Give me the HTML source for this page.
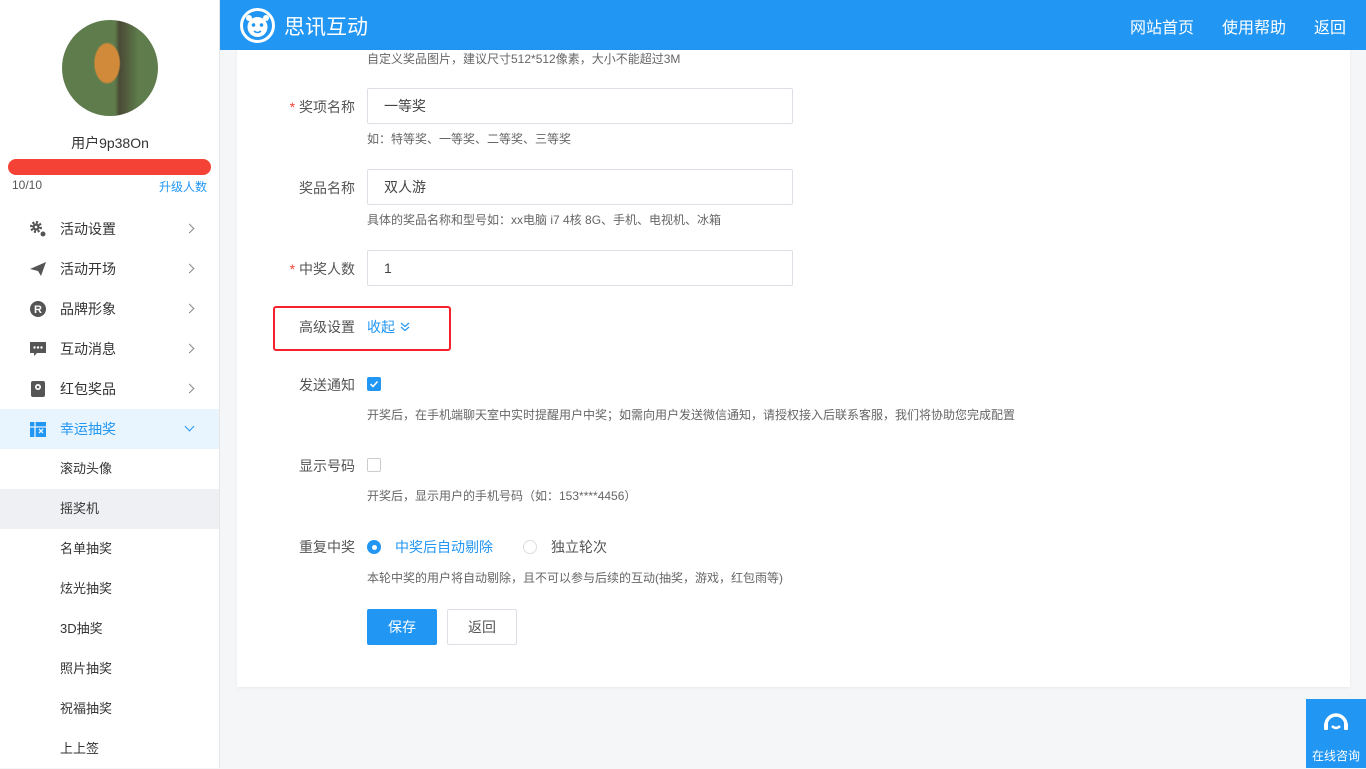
<!DOCTYPE html>
<html><head><meta charset="utf-8"><style>
*{margin:0;padding:0;box-sizing:border-box}
body{width:1366px;height:768px;overflow:hidden;background:#f5f6f7;font-family:"Liberation Sans","Noto Sans CJK SC",sans-serif;color:#333;position:relative}
.side{position:absolute;left:0;top:0;width:220px;height:768px;background:#fff;border-right:1px solid #e6e6e6}
.av{position:absolute;left:62px;top:20px;width:96px;height:96px;border-radius:50%;background:radial-gradient(ellipse 14% 22% at 47% 45%,#d08a3a 0 90%,transparent 100%),linear-gradient(90deg,#5f7d4c 0 55%,#4a4a35 60%,#5f7d4c 80%),#5f7d4c}
.uname{position:absolute;top:133px;width:220px;text-align:center;font-size:14px;color:#333}
.bar{position:absolute;left:8px;top:159px;width:203px;height:16px;border-radius:8px;background:#f44336}
.cnt{position:absolute;left:12px;top:178px;font-size:12px;color:#555}
.up{position:absolute;right:12px;top:178px;font-size:12px;color:#2196f3}
.menu{position:absolute;top:209px;left:0;width:219px}
.mi{height:40px;display:flex;align-items:center;font-size:14px;color:#333;position:relative}
.mi .ic{width:18px;height:18px;margin-left:29px;margin-right:13px;display:flex;align-items:center;justify-content:center}
.mi .ar{position:absolute;right:26px;top:16px;width:7px;height:7px;border-right:1px solid #888;border-top:1px solid #888;transform:rotate(45deg)}
.mi.act{background:#e8f4fe;color:#2196f3}
.mi.act .ar{transform:rotate(135deg);border-color:#2196f3;top:14px}
.sub{height:40px;line-height:40px;padding-left:60px;font-size:13px;color:#333}
.sub.sel{background:#eef0f3}
.hdr{position:absolute;left:220px;top:0;width:1146px;height:50px;background:#2196f3;color:#fff}
.logo{position:absolute;left:20px;top:8px;width:35px;height:35px;border-radius:50%;border:3px solid #fff}
.brand{position:absolute;left:64px;top:11px;font-size:21px}
.nav{position:absolute;right:20px;top:14px;font-size:16px}
.nav span{margin-left:28px}
.card{position:absolute;left:237px;top:50px;width:1113px;height:637px;background:#fff;box-shadow:0 1px 3px rgba(0,0,0,.06)}
.lbl{position:absolute;width:118px;text-align:right;font-size:14px;color:#555;left:0}
.req:before{content:"* ";color:#f44336}
.inp{position:absolute;left:130px;width:426px;height:36px;border:1px solid #dcdfe6;border-radius:2px;font-size:14px;padding-left:16px;line-height:34px;color:#444}
.tip{position:absolute;left:130px;font-size:12px;color:#666}
.chk{position:absolute;left:130px;width:14px;height:14px;border-radius:2px}
</style></head><body>
<div class="side">
<div class="av"></div>
<div class="uname">用户9p38On</div>
<div class="bar"></div>
<div class="cnt">10/10</div><div class="up">升级人数</div>
<div class="menu">
<div class="mi"><span class="ic"><svg width="18" height="18" viewBox="0 0 18 18"><circle cx="7" cy="7" r="4.5" fill="none" stroke="#555" stroke-width="3" stroke-dasharray="2 1.5"/><circle cx="7" cy="7" r="3.5" fill="#555"/><circle cx="7" cy="7" r="1.3" fill="#fff"/><circle cx="14" cy="14" r="2.5" fill="#555"/></svg></span>活动设置<i class="ar"></i></div>
<div class="mi"><span class="ic"><svg width="18" height="18" viewBox="0 0 18 18"><path d="M1 9L17 2 12 16 9 11Z" fill="#555"/></svg></span>活动开场<i class="ar"></i></div>
<div class="mi"><span class="ic"><svg width="18" height="18"><circle cx="9" cy="9" r="8" fill="#555"/><text x="9" y="13" font-size="11" fill="#fff" text-anchor="middle" font-family="Liberation Sans" font-weight="bold">R</text></svg></span>品牌形象<i class="ar"></i></div>
<div class="mi"><span class="ic"><svg width="18" height="18"><path d="M1 2h16v11H8l-3 3v-3H1z" fill="#555"/><circle cx="5.5" cy="7.5" r="1.2" fill="#fff"/><circle cx="9" cy="7.5" r="1.2" fill="#fff"/><circle cx="12.5" cy="7.5" r="1.2" fill="#fff"/></svg></span>互动消息<i class="ar"></i></div>
<div class="mi"><span class="ic"><svg width="18" height="18"><rect x="2" y="1" width="14" height="16" rx="2" fill="#555"/><circle cx="9" cy="7" r="3" fill="#fff"/><circle cx="9" cy="7" r="1.3" fill="#555"/></svg></span>红包奖品<i class="ar"></i></div>
<div class="mi act"><span class="ic"><svg width="18" height="18"><rect x="1" y="2" width="16" height="15" fill="#2196f3"/><path d="M6 2v15M1 7h16M10 9l4 4M14 9l-4 4" stroke="#e8f4fe" stroke-width="1.3"/></svg></span>幸运抽奖<i class="ar"></i></div>
<div class="sub">滚动头像</div>
<div class="sub sel">摇奖机</div>
<div class="sub">名单抽奖</div>
<div class="sub">炫光抽奖</div>
<div class="sub">3D抽奖</div>
<div class="sub">照片抽奖</div>
<div class="sub">祝福抽奖</div>
<div class="sub">上上签</div>
</div></div>
<div class="hdr">
<div class="logo"><svg width="29" height="29" viewBox="0 0 29 29"><circle cx="14.5" cy="16" r="10" fill="#fff"/><circle cx="6" cy="7" r="3" fill="#fff"/><circle cx="23" cy="7" r="3" fill="#fff"/><circle cx="10.5" cy="14" r="1.8" fill="#2196f3"/><circle cx="18.5" cy="14" r="1.8" fill="#2196f3"/><path d="M11 20q3.5 3 7 0" stroke="#2196f3" stroke-width="1.5" fill="none"/></svg></div>
<div class="brand">思讯互动</div>
<div class="nav"><span>网站首页</span><span>使用帮助</span><span>返回</span></div>
</div>
<div class="card">
<div class="tip" style="top:0">自定义奖品图片，建议尺寸512*512像素，大小不能超过3M</div>
<div class="lbl req" style="top:97px;top:47px">奖项名称</div>
<div class="inp" style="top:38px">一等奖</div>
<div class="tip" style="top:80px">如：特等奖、一等奖、二等奖、三等奖</div>
<div class="lbl" style="top:128px">奖品名称</div>
<div class="inp" style="top:119px">双人游</div>
<div class="tip" style="top:161px">具体的奖品名称和型号如：xx电脑 i7 4核 8G、手机、电视机、冰箱</div>
<div class="lbl req" style="top:209px">中奖人数</div>
<div class="inp" style="top:200px">1</div>
<div style="position:absolute;left:36px;top:256px;width:178px;height:45px;border:2px solid #f5222d;border-radius:3px"></div>
<div class="lbl" style="top:267px">高级设置</div>
<div style="position:absolute;left:130px;top:267px;font-size:14px;color:#2196f3">收起 <svg width="12" height="10" viewBox="0 0 12 10"><path d="M2 1l4 3.5L10 1M2 5l4 3.5L10 5" stroke="#2196f3" fill="none" stroke-width="1.2"/></svg></div>
<div class="lbl" style="top:325px">发送通知</div>
<div class="chk" style="top:327px;background:#2196f3"><svg width="14" height="14"><path d="M3.5 7l2.5 2.5 4.5-5" stroke="#fff" stroke-width="1.5" fill="none"/></svg></div>
<div class="tip" style="top:356px">开奖后，在手机端聊天室中实时提醒用户中奖；如需向用户发送微信通知，请授权接入后联系客服，我们将协助您完成配置</div>
<div class="lbl" style="top:406px">显示号码</div>
<div class="chk" style="top:408px;border:1px solid #ccc"></div>
<div class="tip" style="top:437px">开奖后，显示用户的手机号码（如：153****4456）</div>
<div class="lbl" style="top:487px">重复中奖</div>
<div style="position:absolute;left:130px;top:490px;width:14px;height:14px;border-radius:50%;background:#2196f3"><div style="width:5px;height:5px;border-radius:50%;background:#fff;margin:4.5px"></div></div>
<div style="position:absolute;left:158px;top:487px;font-size:14px;color:#2196f3">中奖后自动剔除</div>
<div style="position:absolute;left:286px;top:490px;width:14px;height:14px;border-radius:50%;border:1px solid #ddd"></div>
<div style="position:absolute;left:314px;top:487px;font-size:14px;color:#555">独立轮次</div>
<div class="tip" style="top:519px">本轮中奖的用户将自动剔除，且不可以参与后续的互动(抽奖，游戏，红包雨等)</div>
<div style="position:absolute;left:130px;top:559px;width:70px;height:36px;background:#2196f3;color:#fff;font-size:14px;text-align:center;line-height:36px;border-radius:2px">保存</div>
<div style="position:absolute;left:210px;top:559px;width:70px;height:36px;border:1px solid #dcdfe6;color:#555;font-size:14px;text-align:center;line-height:34px;border-radius:2px">返回</div>
</div>
<div style="position:absolute;left:1306px;top:699px;width:60px;height:69px;background:#2196f3;color:#fff;font-size:12px;text-align:center">
<svg width="32" height="32" viewBox="0 0 32 32" style="display:block;margin:8px auto 0"><path d="M6 18a10 10 0 1 1 20 0" stroke="#fff" stroke-width="3.5" fill="none"/><path d="M12 19q4 4 8 0" stroke="#fff" stroke-width="2.5" fill="none"/><rect x="4" y="16" width="4" height="7" rx="1" fill="#fff"/><rect x="24" y="16" width="4" height="7" rx="1" fill="#fff"/></svg>
<div style="position:absolute;top:48px;width:60px">在线咨询</div></div>
</body></html>
